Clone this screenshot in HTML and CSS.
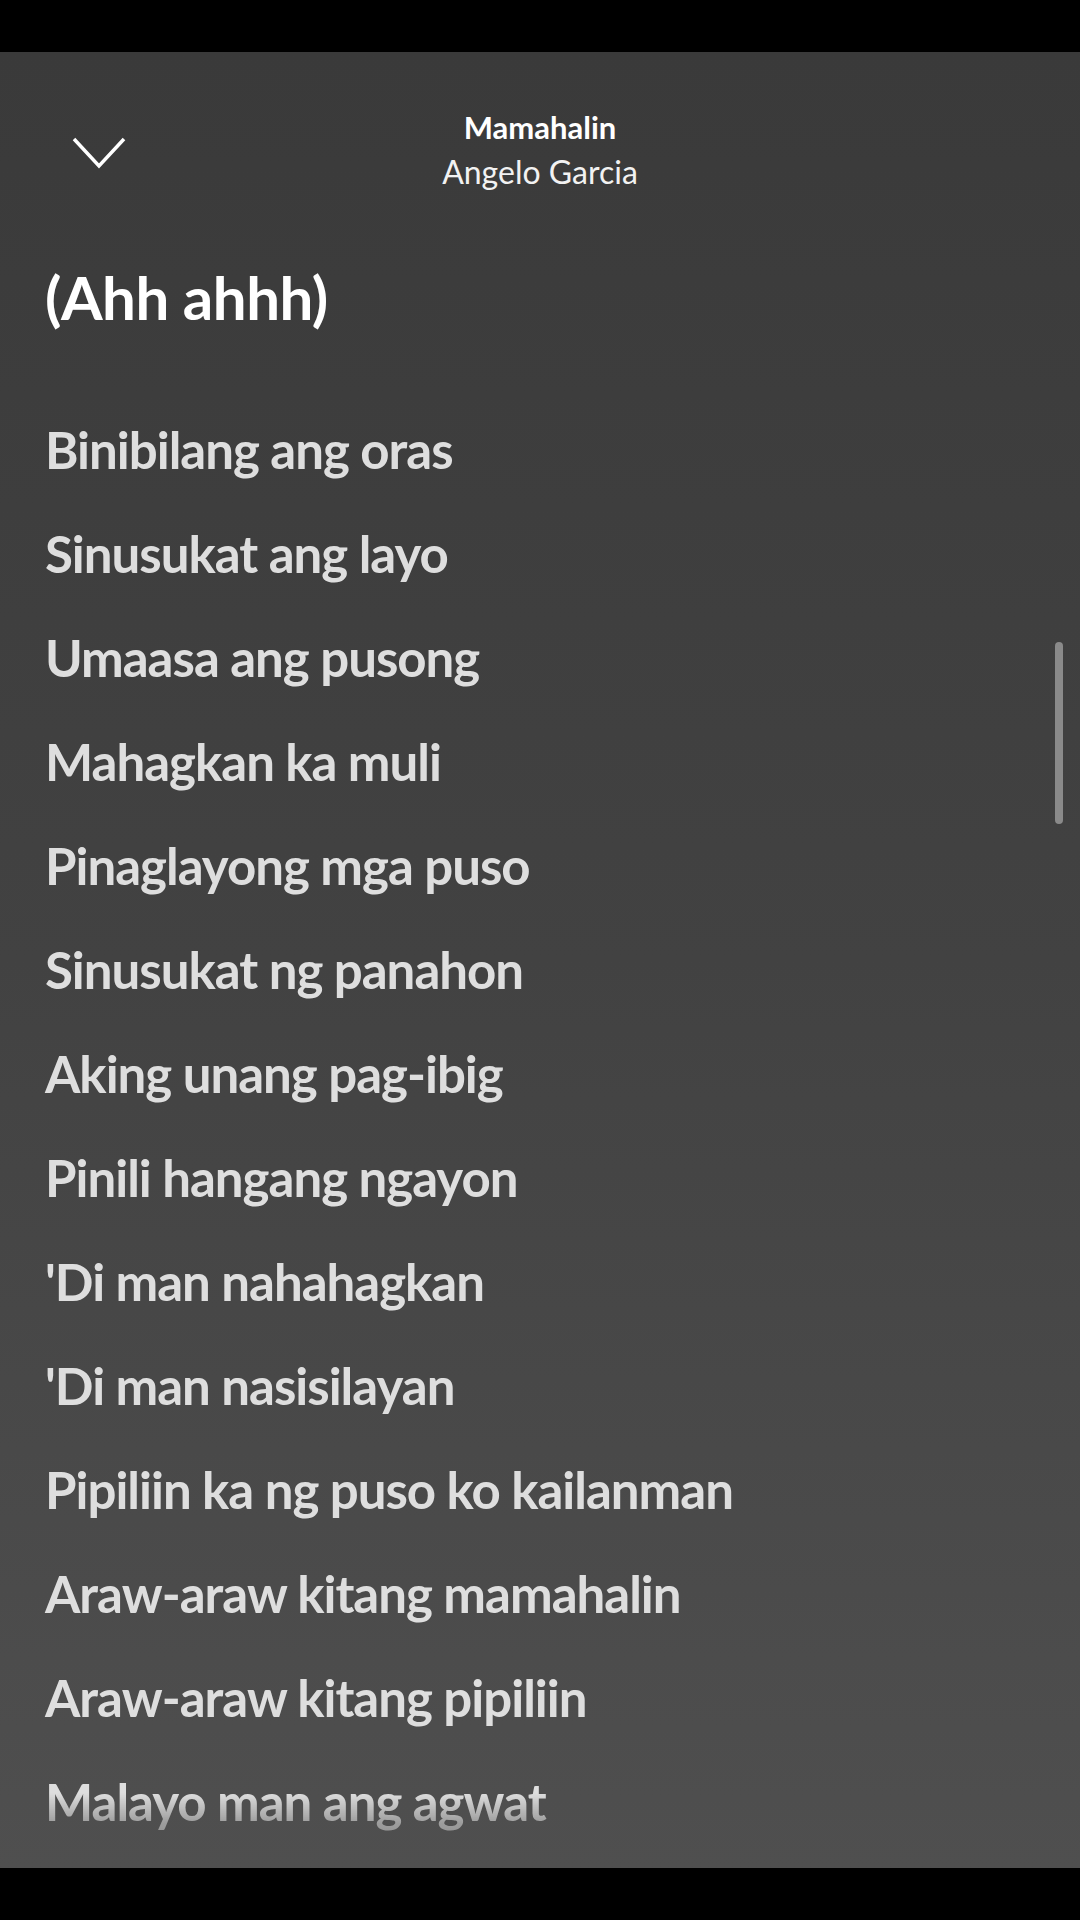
FILE: index.html
```html
<!DOCTYPE html>
<html lang="en">

<head>
    <meta charset="UTF-8">
    <meta name="viewport" content="width=device-width, initial-scale=1.0">
    <title>Mamahalin - Lyrics</title>
    <link rel="stylesheet" href="styles.css">
</head>

<body>
    <div class="bar"></div>

    <div class="screen">
        <!-- Header -->
        <div class="header">
            <div class="back">
                <svg width="54" height="32" viewBox="0 0 54 32">
                    <polyline points="2,2 27,29 52,2" fill="none" stroke="#fff" stroke-width="3.5" stroke-linejoin="miter" />
                </svg>
            </div>
            <div class="track">
                <div class="track-title">Mamahalin</div>
                <div class="track-artist">Angelo Garcia</div>
            </div>
            <div></div>
        </div>

        <!-- Lyrics -->
        <div class="lyrics">
            <p class="line current">(Ahh ahhh)</p>
            <p class="line">Binibilang ang oras</p>
            <p class="line">Sinusukat ang layo</p>
            <p class="line">Umaasa ang pusong</p>
            <p class="line">Mahagkan ka muli</p>
            <p class="line">Pinaglayong mga puso</p>
            <p class="line">Sinusukat ng panahon</p>
            <p class="line">Aking unang pag-ibig</p>
            <p class="line">Pinili hangang ngayon</p>
            <p class="line">'Di man nahahagkan</p>
            <p class="line">'Di man nasisilayan</p>
            <p class="line">Pipiliin ka ng puso ko kailanman</p>
            <p class="line">Araw-araw kitang mamahalin</p>
            <p class="line">Araw-araw kitang pipiliin</p>
            <p class="line">Malayo man ang agwat</p>
        </div>

        <div class="scrollbar"></div>
    </div>

    <div class="bar"></div>
</body>

</html>
```

FILE: styles.css
```css
body {
    margin: 0;
    padding: 0;
    background: #000;
    font-family: Lato, "Noto Sans", sans-serif;
    color: #fff;
}

.bar {
    height: 52px;
    background: #000;
}

.screen {
    position: relative;
    height: 1816px;
    overflow: hidden;
    background: linear-gradient(to bottom, #3a3a3a 0%, #424242 50%, #4f4f4f 100%);
}

.header {
    display: grid;
    grid-template-columns: 1fr auto 1fr;
    align-items: center;
    padding-top: 56px;
}

.back {
    padding-left: 72px;
    padding-top: 6px;
}

.back svg {
    display: block;
}

.track {
    text-align: center;
}

.track-title {
    font-size: 31px;
    font-weight: 700;
    line-height: 38px;
}

.track-artist {
    font-size: 32px;
    line-height: 40px;
    margin-top: 6px;
    color: #f2f2f2;
}

.lyrics {
    margin-top: 53px;
    padding-left: 45px;
    height: 1623px;
    overflow: hidden;
    -webkit-mask-image: linear-gradient(to bottom, #000 calc(100% - 75px), rgba(0, 0, 0, 0.55) calc(100% - 45px), rgba(0, 0, 0, 0.3) 100%);
    mask-image: linear-gradient(to bottom, #000 calc(100% - 75px), rgba(0, 0, 0, 0.55) calc(100% - 45px), rgba(0, 0, 0, 0.3) 100%);
}

.line {
    margin: 0;
    font-size: 51px;
    font-weight: 700;
    line-height: 104px;
    letter-spacing: -1px;
    color: #dedede;
    white-space: nowrap;
}

.line.current {
    color: #fff;
    font-size: 60px;
    letter-spacing: -0.5px;
    margin-bottom: 49px;
}

.scrollbar {
    position: absolute;
    right: 17px;
    top: 590px;
    width: 8px;
    height: 182px;
    border-radius: 4px;
    background: #8a8a8a;
}
```
